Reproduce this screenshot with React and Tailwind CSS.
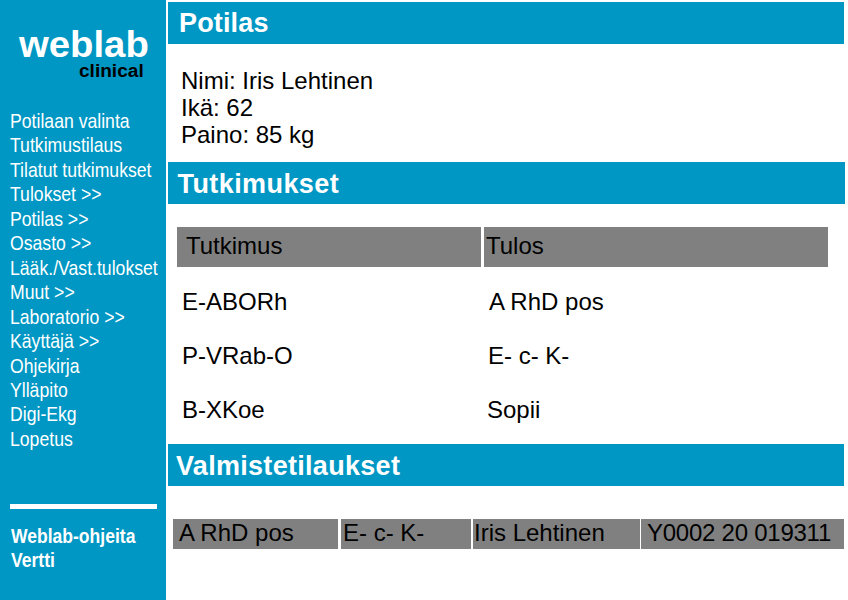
const links = [
  'Potilaan valinta', 'Tutkimustilaus', 'Tilatut tutkimukset', 'Tulokset >>', 'Potilas >>',
  'Osasto >>', 'Lääk./Vast.tulokset', 'Muut >>', 'Laboratorio >>', 'Käyttäjä >>',
  'Ohjekirja', 'Ylläpito', 'Digi-Ekg', 'Lopetus',
];

const results = [
  { test: 'E-ABORh', value: 'A RhD pos', pad: 'pl-[307px]' },
  { test: 'P-VRab-O', value: 'E- c- K-', pad: 'pl-[306px]' },
  { test: 'B-XKoe', value: 'Sopii', pad: 'pl-[305px]' },
];

function Sidebar() {
  return (
    <aside className="flex h-[600px] w-[166px] shrink-0 flex-col bg-[#0097c4] pt-[27px] text-white">
      <div className="ml-[19px] h-9 origin-left scale-x-[1.035] whitespace-nowrap text-[37px] font-bold leading-9">weblab</div>
      <div className="ml-[79px] h-4 origin-left scale-x-[1.06] whitespace-nowrap text-[18px] font-bold leading-4 text-black">clinical</div>
      <nav className="ml-[9.5px] mt-[30px] flex h-[343px] origin-left scale-x-[0.84] flex-col whitespace-nowrap text-[21px] leading-[24.46px]">
        {links.map((l) => <a key={l}>{l}</a>)}
      </nav>
      <div className="ml-[10px] mt-[52px] h-[5px] w-[147px] shrink-0 bg-white" />
      <nav className="ml-[11px] mt-[15px] flex origin-left scale-x-[0.835] flex-col whitespace-nowrap text-[21px] font-bold leading-[24.46px]">
        <a>Weblab-ohjeita</a>
        <a>Vertti</a>
      </nav>
    </aside>
  );
}

function Heading({ children, className }) {
  return (
    <h2 className={`h-[42px] shrink-0 bg-[#0097c4] text-[27px] font-bold text-white ${className}`}>{children}</h2>
  );
}

export default function App() {
  return (
    <div className="flex h-[600px] w-[848px] overflow-hidden bg-white font-['Liberation_Sans',Arial,sans-serif]">
      <Sidebar />
      <main className="ml-[2px] flex w-[680px] flex-col whitespace-nowrap pt-[2px] text-[24px] leading-[27px] text-black">
        <Heading className="w-[676px] pl-[11px] leading-[42px] tracking-[0.15px]">Potilas</Heading>
        <div className="mt-[23px] h-[95px] pl-[13px]">
          <p>Nimi: Iris Lehtinen</p>
          <p>Ikä: 62</p>
          <p>Paino: 85 kg</p>
        </div>
        <Heading className="w-[677px] pl-[9.5px] leading-[44px] tracking-[0.42px]">Tutkimukset</Heading>
        <div className="ml-[9px] mt-[23px] flex h-10 gap-[3px] leading-[38px]">
          <div className="w-[304px] bg-[#808080] pl-[9px]">Tutkimus</div>
          <div className="w-[344px] bg-[#808080] pl-[2px]">Tulos</div>
        </div>
        <div className="mt-[21px] flex h-[156px] flex-col gap-[27px] pl-[14px]">
          {results.map((r) => (
            <div key={r.test} className="flex">
              <span className="w-0">{r.test}</span>
              <span className={r.pad}>{r.value}</span>
            </div>
          ))}
        </div>
        <Heading className="w-[676px] pl-[8px] leading-[44px] tracking-[0.3px]">Valmistetilaukset</Heading>
        <div className="ml-[5px] mt-[33px] flex h-[30px] leading-[27px]">
          <div className="w-[165px] bg-[#808080] pl-[6px]">A RhD pos</div>
          <div className="ml-[3px] w-[130px] bg-[#808080] pl-[2px]">E- c- K-</div>
          <div className="ml-[2px] w-[167px] bg-[#808080] pl-[1px]">Iris Lehtinen</div>
          <div className="ml-px w-[203px] bg-[#808080] pl-[6px] tracking-[-0.25px]">Y0002 20 019311</div>
        </div>
      </main>
    </div>
  );
}
